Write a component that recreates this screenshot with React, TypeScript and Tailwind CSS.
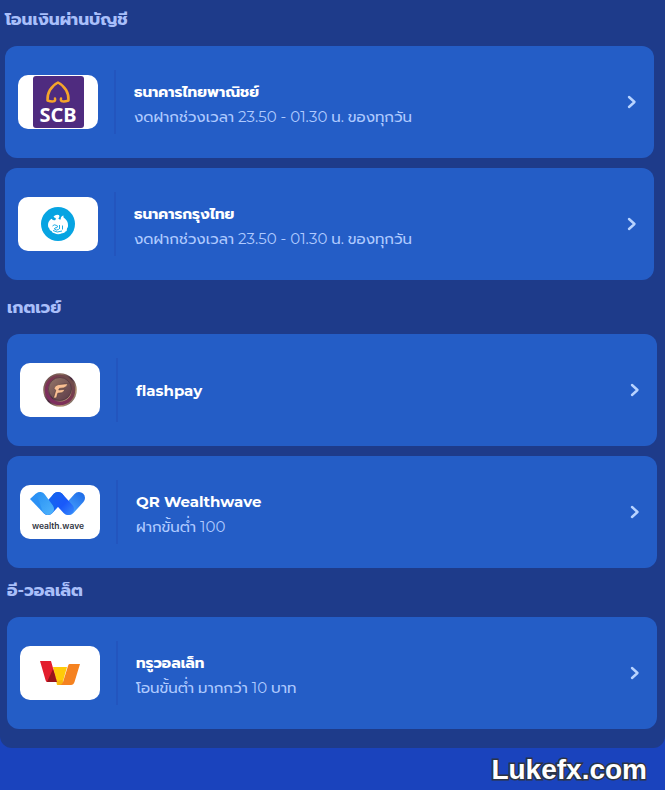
import type { ReactNode } from "react";

function ScbLogo() {
  return (
    <svg viewBox="0 0 51 52" className="h-[52px] w-[51px]" aria-hidden="true">
      <rect width="51" height="52" rx="3" fill="#4f2b7f" />
      <path
        d="M22 22.500C23 26 19 26 14.500 24.500C14 17 18 10 25 6.500C32 10 36 17 35.500 24.500C31 26 27 26 28 22.500"
        fill="none"
        stroke="#f5a52a"
        strokeWidth="2.500"
        strokeLinejoin="round"
        strokeLinecap="round"
      />
      <text x="25" y="46" textAnchor="middle" fill="#fff" fontSize="20" fontWeight="700" fontFamily="'Noto Sans', sans-serif">
        SCB
      </text>
    </svg>
  );
}

function KrungthaiLogo() {
  return (
    <svg viewBox="0 0 34 34" className="size-[34px]" aria-hidden="true">
      <circle cx="17" cy="17" r="17" fill="#07a4e2" />
      <path
        d="M12.500 9.500Q15 6.800 17.800 8Q19.300 9.300 17.300 11.500Q18.500 13 19.800 12.300Q19.300 9.500 22.500 8.500Q21.800 10.500 23.500 11.300Q27 14 27 18Q27.300 20.500 26 21.500Q26.200 24 24.500 24.500Q23.500 26.500 21 26.300Q17 28 13.500 26.300Q11.500 26.300 10.500 24Q8.500 23.800 8.300 21.500Q6.800 20.500 7 18Q7 14 10.500 11.800Q12.500 14 14.500 13L14.800 11Q13.500 11 12.500 9.500Z"
        fill="#fff"
      />
      <path
        d="M11.500 19Q13 17 15.200 18.300Q17.500 18.500 16 20.600Q13.500 20.500 13.300 22Q15.500 24 17.800 22.300M18.500 18V22M21.500 18.500V22.500M12 23.500Q16 26.300 21 24"
        fill="none"
        stroke="#07a4e2"
        strokeWidth="0.900"
      />
    </svg>
  );
}

function FlashpayLogo() {
  return (
    <svg viewBox="0 0 34 34" className="size-[34px]" aria-hidden="true">
      <defs>
        <linearGradient id="coinRim" x1="0" y1="0" x2="1" y2="1">
          <stop offset="0" stopColor="#51313c" />
          <stop offset="0.300" stopColor="#8e7160" />
          <stop offset="0.500" stopColor="#45263b" />
          <stop offset="0.750" stopColor="#b89a75" />
          <stop offset="1" stopColor="#302849" />
        </linearGradient>
        <linearGradient id="coinRing" x1="1" y1="0" x2="0" y2="1">
          <stop offset="0" stopColor="#6b5548" />
          <stop offset="0.500" stopColor="#7c3352" />
          <stop offset="1" stopColor="#7d2c63" />
        </linearGradient>
        <linearGradient id="coinFace" x1="0" y1="0" x2="1" y2="1">
          <stop offset="0" stopColor="#957768" />
          <stop offset="1" stopColor="#5b3947" />
        </linearGradient>
      </defs>
      <circle cx="17" cy="17" r="16.800" fill="url(#coinRim)" />
      <circle cx="17" cy="17" r="13.500" fill="none" stroke="url(#coinRing)" strokeWidth="3.500" />
      <circle cx="17" cy="16" r="11.500" fill="url(#coinFace)" stroke="#3f2a35" strokeWidth="0.500" />
      <path
        d="M11 15.500Q12 12 15.500 11.600L25 10.700Q23.500 14.500 20.500 14.900L16.500 15.400L15.700 17L22 16.300Q20.800 19.300 18.500 19.700L14.800 20.200L13.500 24.800L10.500 25.200L12.800 17.200Z"
        fill="#f9bf93"
        stroke="#3d2b2e"
        strokeWidth="0.500"
      />
    </svg>
  );
}

function WealthwaveLogo() {
  return (
    <svg viewBox="0 0 60 42" className="h-[42px] w-[60px]" aria-hidden="true">
      <defs>
        <linearGradient id="waveLeft" gradientUnits="userSpaceOnUse" x1="2" y1="2" x2="24" y2="24">
          <stop offset="0" stopColor="#238cf2" />
          <stop offset="1" stopColor="#50b4fc" />
        </linearGradient>
        <linearGradient id="waveMiddle" gradientUnits="userSpaceOnUse" x1="22" y1="2" x2="46" y2="24">
          <stop offset="0" stopColor="#1564ed" />
          <stop offset="0.500" stopColor="#1959fa" />
          <stop offset="1" stopColor="#3c91fa" />
        </linearGradient>
        <linearGradient id="waveRight" gradientUnits="userSpaceOnUse" x1="38" y1="22" x2="54" y2="2">
          <stop offset="0" stopColor="#4aa5ff" />
          <stop offset="1" stopColor="#1d6ae7" />
        </linearGradient>
      </defs>
      <g fill="none" strokeWidth="12" strokeLinecap="round">
        <path d="M39 18L49 7" stroke="url(#waveRight)" />
        <path d="M18 18L28 7" stroke="#1562f2" />
        <path d="M10 7L18 18" stroke="url(#waveLeft)" />
        <path d="M28 7L38 18" stroke="url(#waveMiddle)" />
      </g>
      <path d="M0 8L6 2.500L10 13L13 21.500Z" fill="#2b91f5" />
      <text x="28" y="38" textAnchor="middle" fill="#30343f" fontSize="8.500" fontWeight="600" fontFamily="Inter, sans-serif">
        wealth.wave
      </text>
    </svg>
  );
}

function TrueWalletLogo() {
  return (
    <svg viewBox="0 0 42 26" className="h-[26px] w-[42px]" aria-hidden="true">
      <path d="M14 7H28L23 25H18Z" fill="#ffcb08" />
      <path d="M1 1H12L18 22H8Q7 22 6.500 20Z" fill="#e31e2d" />
      <path d="M14 9L18 22H8Z" fill="#98151b" />
      <path d="M15.500 14L19 25H25L23 20L18 21Z" fill="#f6b511" />
      <path d="M30.500 4H41L35.500 22Q34.500 25 32 25H20Q23 25 24 22L29 6Q29.500 4 30.500 4Z" fill="#f58220" />
    </svg>
  );
}

type Channel = { title: string; note?: string; logo: ReactNode };

const banks: Channel[] = [
  { title: "ธนาคารไทยพาณิชย์", note: "งดฝากช่วงเวลา 23.50 - 01.30 น. ของทุกวัน", logo: <ScbLogo /> },
  { title: "ธนาคารกรุงไทย", note: "งดฝากช่วงเวลา 23.50 - 01.30 น. ของทุกวัน", logo: <KrungthaiLogo /> },
];
const gateways: Channel[] = [
  { title: "flashpay", logo: <FlashpayLogo /> },
  { title: "QR Wealthwave", note: "ฝากขั้นต่ำ 100", logo: <WealthwaveLogo /> },
];
const wallets: Channel[] = [
  { title: "ทรูวอลเล็ท", note: "โอนขั้นต่ำ มากกว่า 10 บาท", logo: <TrueWalletLogo /> },
];

function ChannelCard({ title, note, logo }: Channel) {
  return (
    <button type="button" className="flex min-h-28 w-full items-center rounded-xl bg-[#245dc6] px-[13px] text-left">
      <span className="flex h-[54px] w-20 shrink-0 items-center justify-center overflow-hidden rounded-[10px] bg-white">
        {logo}
      </span>
      <span className="ml-4 h-16 w-0.5 shrink-0 bg-[#2355be]" />
      <span className="ml-[18px] flex min-w-0 flex-1 flex-col">
        <span className={note ? "pt-1 text-[15px] leading-[25px] font-bold text-white" : "text-[15px] leading-[25px] font-bold text-white"}>
          {title}
        </span>
        {note && <span className="text-[15px] leading-[25px] text-[#afcaff]">{note}</span>}
      </span>
      <svg viewBox="0 0 10 14" className="mr-1 h-3.5 w-2.5 shrink-0" fill="none" aria-hidden="true">
        <path d="M2 2L7.500 7L2 12" stroke="#b8d3ff" strokeWidth="2.400" strokeLinecap="round" strokeLinejoin="round" />
      </svg>
    </button>
  );
}

function ChannelSection({ title, channels, className }: { title: string; channels: Channel[]; className: string }) {
  return (
    <section className={className}>
      <h2 className="text-[17px] leading-[26px] font-bold text-[#a9bffa]">{title}</h2>
      <div className="mt-3.5 flex flex-col gap-2.5">
        {channels.map((channel) => (
          <ChannelCard key={channel.title} {...channel} />
        ))}
      </div>
    </section>
  );
}

export default function App() {
  return (
    <div className="min-h-screen bg-[#1a43bd] font-['Montserrat','Prompt','Noto_Sans_Thai','Inter',sans-serif]">
      <main className="rounded-b-xl bg-[#1e3b8a] pb-[19px]">
        <ChannelSection title="โอนเงินผ่านบัญชี" channels={banks} className="pt-1.5 pr-[11px] pl-[5px]" />
        <ChannelSection title="เกตเวย์" channels={gateways} className="pt-3.5 pr-2 pl-[7px]" />
        <ChannelSection title="อี-วอลเล็ต" channels={wallets} className="pt-[9px] pr-2 pl-[7px]" />
      </main>
      <footer className="flex justify-end pt-1 pr-[18px]">
        <p className="font-['Liberation_Sans',Arial,sans-serif] text-[28px] leading-9 font-bold text-white [paint-order:stroke_fill] [-webkit-text-stroke:3px_#2c3444]">
          Lukefx.com
        </p>
      </footer>
    </div>
  );
}
